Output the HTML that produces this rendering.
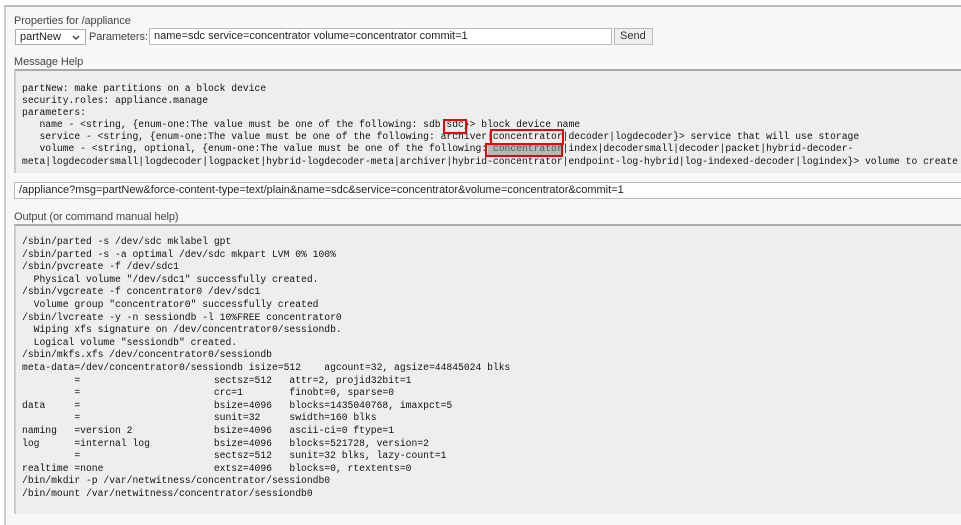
<!DOCTYPE html>
<html><head><meta charset="utf-8"><style>
*{margin:0;padding:0;box-sizing:border-box}
body{width:961px;height:502px;overflow:hidden;background:#fff;position:relative;font-family:"Liberation Sans",Arial,sans-serif;font-size:11px;color:#333}
.frame{position:absolute;left:4px;top:5px;width:970px;height:520px;border-top:2px solid #bbb;border-left:2px solid #ccc;background:#f8f8f8}
.a{position:absolute}
.lbl{font-size:11px;color:#444;letter-spacing:-0.1px}
.panel{position:absolute;left:14px;right:0;background:#eee;border-top:2px solid #aaa;border-left:2px solid #ccc}
pre{position:absolute;font-family:"Liberation Mono","DejaVu Sans Mono",monospace;font-size:9.7px;line-height:12.1px;color:#111;white-space:pre}
.box{position:absolute;border:2px solid #e00}
</style></head><body>
<div class="frame"></div>
<div class="a lbl" style="left:14px;top:15px">Properties for /appliance</div>
<div class="a" style="left:15px;top:29px;width:71px;height:16px;border:1px solid #aaa;background:#fff;font-size:11px;padding:1px 4px;color:#222">partNew<svg style="position:absolute;right:5px;top:5px" width="8" height="5" viewBox="0 0 8 5"><path d="M1 1L4 4L7 1" fill="none" stroke="#333" stroke-width="1.3"/></svg></div>
<div class="a lbl" style="left:89px;top:31px">Parameters:</div>
<div class="a" style="left:149px;top:28px;width:463px;height:17px;border:1px solid #bbb;background:#fff;font-size:11px;padding:1px 4px;color:#222">name=sdc service=concentrator volume=concentrator commit=1</div>
<div class="a" style="left:614px;top:28px;width:39px;height:17px;border:1px solid #bbb;background:#efefef;font-size:11px;padding:1px 5px;color:#333">Send</div>
<div class="a lbl" style="left:14px;top:56px">Message Help</div>
<div class="panel" style="top:69px;height:104px"></div>
<pre style="left:22px;top:83px">partNew: make partitions on a block device
security.roles: appliance.manage
parameters:
   name - &lt;string, {enum-one:The value must be one of the following: sdb sdc}&gt; block device name
   service - &lt;string, {enum-one:The value must be one of the following: archiver|concentrator|decoder|logdecoder}&gt; service that will use storage
   volume - &lt;string, optional, {enum-one:The value must be one of the following: concentrator|index|decodersmall|decoder|packet|hybrid-decoder-
meta|logdecodersmall|logdecoder|logpacket|hybrid-logdecoder-meta|archiver|hybrid-concentrator|endpoint-log-hybrid|log-indexed-decoder|logindex}&gt; volume to create</pre>
<div class="a" style="left:488px;top:145px;width:74px;height:10px;background:#8a8a8a;opacity:.55"></div>
<div class="box" style="left:443px;top:119px;width:24px;height:15px"></div>
<div class="box" style="left:490px;top:129px;width:74px;height:16px"></div>
<div class="box" style="left:485px;top:143px;width:78px;height:14px"></div>
<div class="a" style="left:14px;top:182px;width:960px;height:17px;border:1px solid #bbb;background:#fff;font-size:11px;padding:1px 4px;color:#222">/appliance?msg=partNew&amp;force-content-type=text/plain&amp;name=sdc&amp;service=concentrator&amp;volume=concentrator&amp;commit=1</div>
<div class="a lbl" style="left:14px;top:211px">Output (or command manual help)</div>
<div class="panel" style="top:224px;height:290px"></div>
<pre style="left:22px;top:236px;line-height:12.6px">/sbin/parted -s /dev/sdc mklabel gpt
/sbin/parted -s -a optimal /dev/sdc mkpart LVM 0% 100%
/sbin/pvcreate -f /dev/sdc1
  Physical volume "/dev/sdc1" successfully created.
/sbin/vgcreate -f concentrator0 /dev/sdc1
  Volume group "concentrator0" successfully created
/sbin/lvcreate -y -n sessiondb -l 10%FREE concentrator0
  Wiping xfs signature on /dev/concentrator0/sessiondb.
  Logical volume "sessiondb" created.
/sbin/mkfs.xfs /dev/concentrator0/sessiondb
meta-data=/dev/concentrator0/sessiondb isize=512    agcount=32, agsize=44845024 blks
         =                       sectsz=512   attr=2, projid32bit=1
         =                       crc=1        finobt=0, sparse=0
data     =                       bsize=4096   blocks=1435040768, imaxpct=5
         =                       sunit=32     swidth=160 blks
naming   =version 2              bsize=4096   ascii-ci=0 ftype=1
log      =internal log           bsize=4096   blocks=521728, version=2
         =                       sectsz=512   sunit=32 blks, lazy-count=1
realtime =none                   extsz=4096   blocks=0, rtextents=0
/bin/mkdir -p /var/netwitness/concentrator/sessiondb0
/bin/mount /var/netwitness/concentrator/sessiondb0</pre>
</body></html>
